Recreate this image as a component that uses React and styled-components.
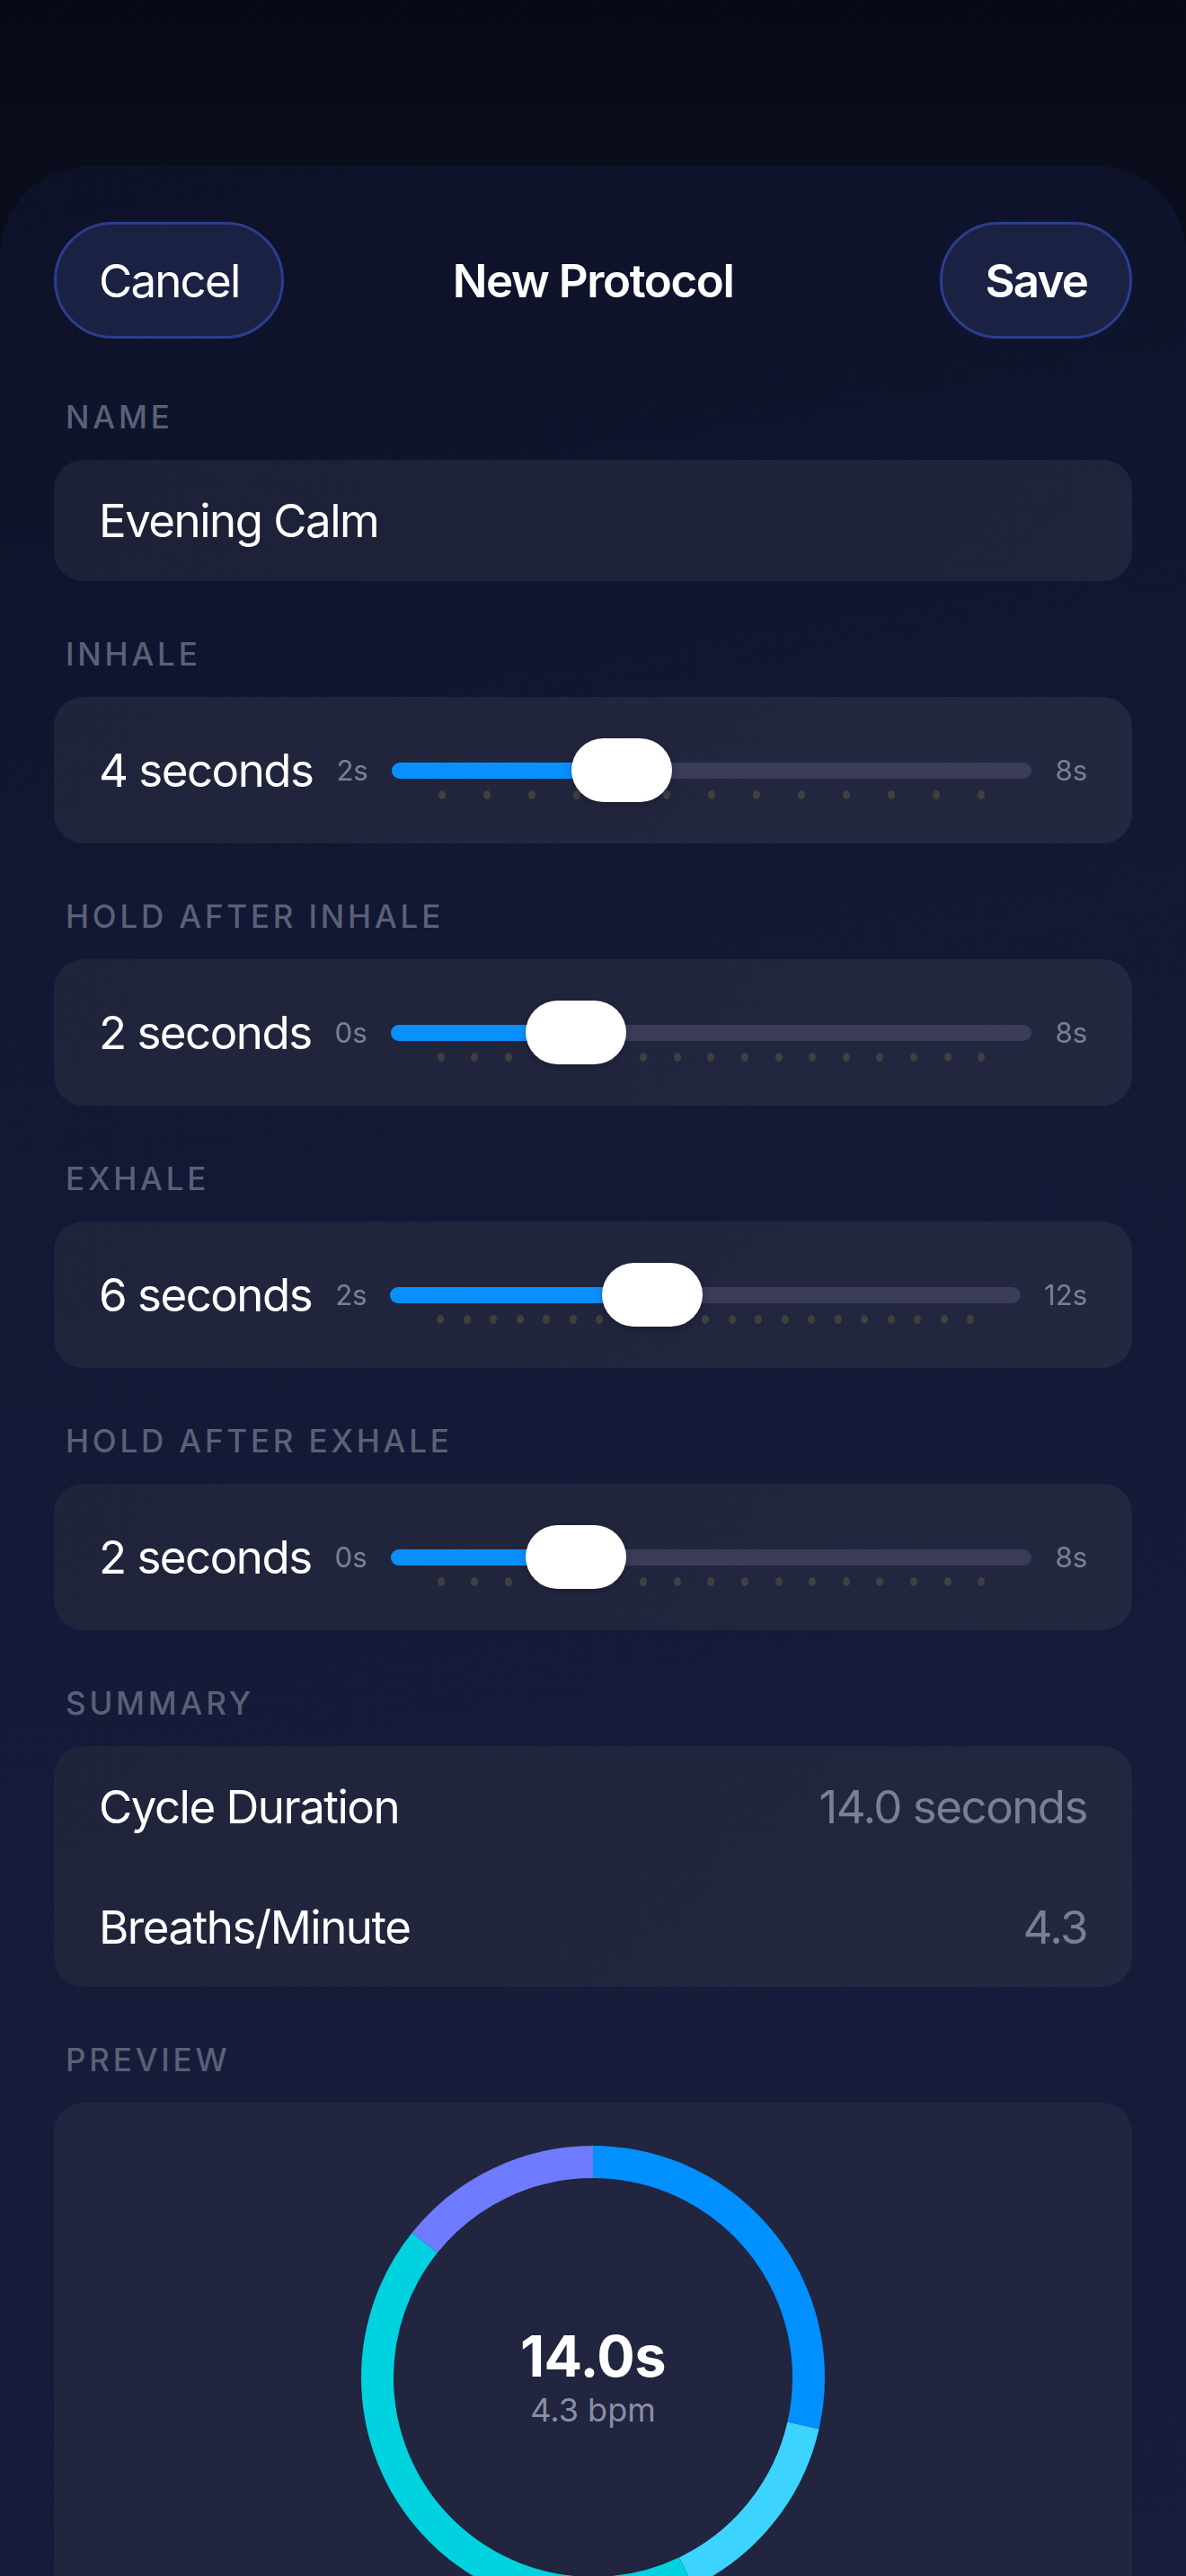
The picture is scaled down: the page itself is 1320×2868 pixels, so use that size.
import React from 'react';
import styled, { createGlobalStyle } from 'styled-components';

const GlobalStyle = createGlobalStyle`
  html, body {
    margin: 0;
    padding: 0;
    background: #080a16;
  }
  body {
    font-family: Inter, "Noto Sans", "Liberation Sans", sans-serif;
    color: #ffffff;
    -webkit-font-smoothing: antialiased;
  }
  * {
    box-sizing: border-box;
  }
`;

const Screen = styled.div`
  height: 2868px;
  overflow: hidden;
  padding-top: 185px;
  background: linear-gradient(180deg, #070914 0%, #0a0d1b 185px);
`;

const Sheet = styled.div`
  min-height: 2683px;
  border-radius: 100px 100px 0 0;
  padding: 62px 60px 0;
  background: linear-gradient(170deg, #0d1229 0%, #121733 30%, #161b3a 65%, #181c3d 100%);
`;

const Header = styled.header`
  display: grid;
  grid-template-columns: 1fr auto 1fr;
  align-items: center;
  margin-bottom: 65px;
`;

const PillButton = styled.button`
  justify-self: ${(p) => (p.$end ? 'end' : 'start')};
  height: 130px;
  padding: 0 47px;
  border-radius: 65px;
  border: 3px solid #2c3d8c;
  background: linear-gradient(180deg, #1a2243 0%, #1b2142 100%);
  color: #ffffff;
  font-family: inherit;
  font-size: 51px;
  font-weight: ${(p) => (p.$bold ? 600 : 400)};
  letter-spacing: -1.8px;
  cursor: pointer;
`;

const Title = styled.h1`
  margin: 0;
  font-size: 51px;
  font-weight: 600;
  letter-spacing: -1.4px;
`;

const Section = styled.section`
  margin-bottom: 59px;
`;

const SectionLabel = styled.div`
  height: 44px;
  line-height: 44px;
  padding-left: 13px;
  margin-bottom: 26px;
  font-size: 35px;
  font-weight: 500;
  letter-spacing: 3.8px;
  text-transform: uppercase;
  color: #5b6076;
`;

const Panel = styled.div`
  border-radius: 33px;
  background: ${(p) => p.$bg || 'linear-gradient(135deg, #20243b 0%, #23273f 100%)'};
  padding: 0 50px;
`;

const NameField = styled(Panel)`
  height: 135px;
  display: flex;
  align-items: center;
  font-size: 51px;
  letter-spacing: -1.5px;
`;

const SliderRow = styled(Panel)`
  height: 163px;
  display: flex;
  align-items: center;
  gap: 26px;
`;

const ValueText = styled.span`
  font-size: 51px;
  letter-spacing: -1.5px;
  white-space: nowrap;
  color: #ffffff;
`;

const RangeText = styled.span`
  font-size: 31px;
  color: #7b7f95;
  white-space: nowrap;
`;

const Track = styled.div`
  position: relative;
  flex: 1;
  height: 18px;
  border-radius: 9px;
  background: #3a3c58;
`;

const Fill = styled.div`
  height: 100%;
  border-radius: 9px;
  background: #0a8fff;
`;

const Ticks = styled.div`
  position: absolute;
  left: 52px;
  right: 52px;
  top: 31px;
  display: flex;
  justify-content: space-between;
`;

const Tick = styled.span`
  width: 8px;
  height: 10px;
  border-radius: 50%;
  background: #3e413f;
`;

const Thumb = styled.div`
  position: absolute;
  top: 50%;
  width: 112px;
  height: 71px;
  margin-top: -35.5px;
  border-radius: 36px;
  background: #ffffff;
  box-shadow: 0 2px 8px rgba(0, 0, 0, 0.25);
`;

const SummaryRow = styled.div`
  height: 134px;
  display: flex;
  align-items: center;
  justify-content: space-between;
  font-size: 51px;
  letter-spacing: -1.5px;
`;

const SummaryValue = styled.span`
  color: #7b7f95;
`;

const PreviewPanel = styled(Panel)`
  height: 640px;
  padding-top: 48px;
  display: flex;
  justify-content: center;
  align-items: flex-start;
  background: #21253f;
`;

const RingWrap = styled.div`
  position: relative;
  width: 516px;
  height: 516px;
`;

const RingCenter = styled.div`
  position: absolute;
  inset: 0;
  display: flex;
  flex-direction: column;
  align-items: center;
  justify-content: center;
  padding-bottom: 4px;
`;

const BigTime = styled.div`
  font-size: 63px;
  font-weight: 700;
  line-height: 76px;
  letter-spacing: -0.5px;
`;

const Bpm = styled.div`
  font-size: 36px;
  line-height: 44px;
  color: #8a8ea4;
`;

const phases = [
  { key: 'inhale', label: 'Inhale', value: 4, min: 2, max: 8, color: '#0090ff' },
  { key: 'holdIn', label: 'Hold After Inhale', value: 2, min: 0, max: 8, color: '#3dd3ff' },
  { key: 'exhale', label: 'Exhale', value: 6, min: 2, max: 12, color: '#00d2e0' },
  { key: 'holdOut', label: 'Hold After Exhale', value: 2, min: 0, max: 8, color: '#6e7bff' },
];

function Slider({ value, min, max, step = 0.5 }) {
  const f = (value - min) / (max - min);
  const count = Math.round((max - min) / step) + 1;
  return (
    <Track>
      <Fill style={{ width: `calc(56px + (100% - 112px) * ${f})` }} />
      <Ticks>
        {Array.from({ length: count }).map((_, i) => (
          <Tick key={i} />
        ))}
      </Ticks>
      <Thumb style={{ left: `calc((100% - 112px) * ${f})` }} />
    </Track>
  );
}

function Ring({ items, total }) {
  const r = 240;
  const c = 2 * Math.PI * r;
  let offset = 0;
  return (
    <svg width="516" height="516" viewBox="0 0 516 516">
      <g transform="rotate(-90 258 258)">
        {items.map((p) => {
          const len = (p.value / total) * c;
          const seg = (
            <circle
              key={p.key}
              cx="258"
              cy="258"
              r={r}
              fill="none"
              stroke={p.color}
              strokeWidth="36"
              strokeDasharray={`${len} ${c - len}`}
              strokeDashoffset={-offset}
            />
          );
          offset += len;
          return seg;
        })}
      </g>
    </svg>
  );
}

export default function App() {
  const total = phases.reduce((s, p) => s + p.value, 0);
  const bpm = (60 / total).toFixed(1);

  return (
    <>
      <GlobalStyle />
      <Screen>
        <Sheet>
          <Header>
            <PillButton>Cancel</PillButton>
            <Title>New Protocol</Title>
            <PillButton $end $bold>Save</PillButton>
          </Header>

          <Section>
            <SectionLabel>Name</SectionLabel>
            <NameField $bg="linear-gradient(135deg, #1d2137 0%, #20243c 100%)">Evening Calm</NameField>
          </Section>

          {phases.map((p) => (
            <Section key={p.key}>
              <SectionLabel>{p.label}</SectionLabel>
              <SliderRow>
                <ValueText>{p.value} seconds</ValueText>
                <RangeText>{p.min}s</RangeText>
                <Slider value={p.value} min={p.min} max={p.max} />
                <RangeText>{p.max}s</RangeText>
              </SliderRow>
            </Section>
          ))}

          <Section>
            <SectionLabel>Summary</SectionLabel>
            <Panel>
              <SummaryRow>
                <span>Cycle Duration</span>
                <SummaryValue>{total.toFixed(1)} seconds</SummaryValue>
              </SummaryRow>
              <SummaryRow>
                <span>Breaths/Minute</span>
                <SummaryValue>{bpm}</SummaryValue>
              </SummaryRow>
            </Panel>
          </Section>

          <Section>
            <SectionLabel>Preview</SectionLabel>
            <PreviewPanel>
              <RingWrap>
                <Ring items={phases} total={total} />
                <RingCenter>
                  <BigTime>{total.toFixed(1)}s</BigTime>
                  <Bpm>{bpm} bpm</Bpm>
                </RingCenter>
              </RingWrap>
            </PreviewPanel>
          </Section>
        </Sheet>
      </Screen>
    </>
  );
}
